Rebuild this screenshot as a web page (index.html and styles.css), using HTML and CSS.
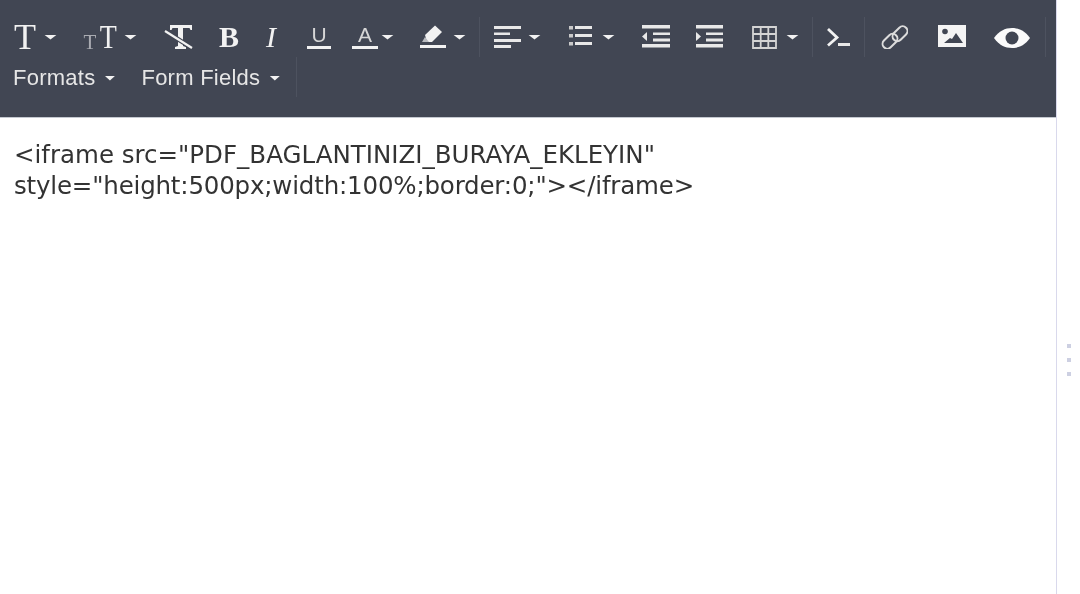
FILE: index.html
```html
<!DOCTYPE html>
<html lang="tr">
<head>
<meta charset="utf-8">
<title>Editor</title>
<link rel="stylesheet" href="styles.css">
</head>
<body>
<div class="editor">
  <div class="toolbar">
    <div class="group">
      <button class="btn"><span class="g g-t">T</span><i class="caret"></i></button>
      <button class="btn"><span class="g g-tt"><small>T</small><span class="tall">T</span></span><i class="caret"></i></button>
      <button class="btn"><svg width="30" height="24" viewBox="0 0 30 24"><path fill="#f2f2f2" d="M7 0h22v5h-1.500l-1-2H20v18l3 1v2H12v-2l3-1V3H9.500l-1 2H7z"/><path stroke="#414653" stroke-width="4.500" d="M2 6l27 17"/><path stroke="#f2f2f2" stroke-width="2.200" d="M2 6l27 17"/></svg></button>
      <button class="btn"><span class="g g-b">B</span></button>
      <button class="btn"><span class="g g-i">I</span></button>
      <button class="btn"><span class="g g-u">U<b class="bar"></b></span></button>
      <button class="btn btn-near gap-3"><span class="g g-a">A<b class="bar"></b></span><i class="caret"></i></button>
      <button class="btn"><svg width="26" height="24" viewBox="0 0 26 24"><path fill="#f2f2f2" d="M15 .500L22 7 12 17H7L5 10z"/><path fill="#b9bbc0" d="M5 12l4 5H2z"/><rect y="20" width="26" height="3" fill="#f2f2f2"/></svg><i class="caret"></i></button>
    </div>
    <div class="group">
      <button class="btn"><svg width="28" height="24" viewBox="0 0 28 24"><path fill="#e8e8e8" d="M1 1h27v3H1zM1 7.500h16v2.500H1zM1 14h27v3H1zM1 20h17v3H1z"/></svg><i class="caret"></i></button>
      <button class="btn"><svg width="28" height="24" viewBox="0 0 28 24"><path fill="#e8e8e8" d="M8 1h17v3H8zM8 9h17v3H8zM8 17h17v3H8z"/><path fill="#c9c9c9" d="M2 1h4v3.500H2zM2 9h4v3.500H2zM2 17h4v3.500H2z"/></svg><i class="caret"></i></button>
      <button class="btn"><svg width="29" height="24" viewBox="0 0 29 24"><path fill="#e8e8e8" d="M1 0h28v3.500H1zM12 7.500h17V10H12zM12 13.500h17v3H12zM1 19h28v3.500H1z"/><path fill="#e8e8e8" d="M6 7v9l-5-4.500z"/></svg></button>
      <button class="btn"><svg width="28" height="24" viewBox="0 0 28 24"><path fill="#e8e8e8" d="M0 0h27v3.500H0zM10 7.500h17V10H10zM10 13.500h17v3H10zM0 19h27v3.500H0z"/><path fill="#e8e8e8" d="M0 7v9l5-4.500z"/></svg></button>
      <button class="btn"><svg width="29" height="24" viewBox="0 0 29 24"><path fill="none" stroke="#d4d4d4" stroke-width="1.800" d="M3 2h23v21H3zM10.700 2v21M18.300 2v21M3 9h23M3 16h23"/></svg><i class="caret"></i></button>
    </div>
    <div class="group">
      <button class="btn"><svg width="25" height="24" viewBox="0 0 25 24"><path fill="none" stroke="#f2f2f2" stroke-width="2.800" d="M2 4l9 8.500L2 20.500"/><rect x="12" y="18" width="12" height="3" fill="#e8e8e8"/></svg></button>
    </div>
    <div class="group">
      <button class="btn"><svg width="30" height="24" viewBox="0 0 30 24"><g fill="none" stroke="#dcdcdc" stroke-width="2"><rect x="13.500" y="4" width="17" height="9.500" rx="4.700" transform="rotate(-45 22 8.750)"/><rect x="3.500" y="11.500" width="17" height="9.500" rx="4.700" transform="rotate(-45 12 16.250)"/></g></svg></button>
      <button class="btn"><svg width="32" height="24" viewBox="0 0 32 24"><path fill="#f4f4f4" d="M4 0h28v22H4z"/><circle cx="11" cy="6.500" r="2.800" fill="#414653"/><path fill="#414653" d="M10 18l6-5 2 1 4-6 7 10z"/></svg></button>
      <button class="btn"><svg width="40" height="24" viewBox="0 0 40 24"><path fill="#fbfbfb" d="M2 13C7 6 13 3 20 3s13 3 18 10c-5 7-11 10-18 10S7 20 2 13z"/><circle cx="20" cy="13" r="6.500" fill="#414653"/></svg></button>
    </div>
    <div class="group group-text">
      <button class="btn btn-text">Formats<i class="caret caret-s"></i></button>
      <button class="btn btn-text">Form Fields<i class="caret caret-s"></i></button>
    </div>
  </div>
  <div class="content">&lt;iframe src="PDF_BAGLANTINIZI_BURAYA_EKLEYIN" <span class="line-2">style="height:500px;width:100%;border:0;"&gt;&lt;/iframe&gt;</span></div>
</div>
<div class="handle"><span></span><span></span><span></span></div>
</body>
</html>
```

FILE: styles.css
```css
html, body {
  margin: 0;
  height: 594px;
  overflow: hidden;
  background: #fff;
}
body {
  display: flex;
  align-items: stretch;
  filter: blur(0.45px);
}
.editor {
  width: 1056px;
  height: 594px;
  border-right: 1px solid #d9d9ec;
  flex: none;
}
.toolbar {
  box-sizing: border-box;
  height: 118px;
  padding-top: 17px;
  background: #414653;
  border-bottom: 1px solid #c4c8d0;
  display: flex;
  flex-wrap: wrap;
  align-content: flex-start;
}
.group {
  display: flex;
  height: 40px;
  border-right: 1px solid #4d525f;
}
.btn {
  display: flex;
  align-items: center;
  gap: 7px;
  height: 40px;
  padding: 0 13px;
  border: 0;
  background: none;
  color: #f2f2f2;
}
.btn svg { display: block; flex: none; }
.btn-near { padding-left: 8px; }
.gap-3 { gap: 3px; }
.caret {
  width: 13px;
  height: 5px;
  background: #f2f2f2;
  clip-path: polygon(0 0, 100% 0, 50% 100%);
}
.caret-s {
  width: 11px;
}
.g {
  position: relative;
  display: block;
  height: 24px;
  line-height: 24px;
  text-align: center;
  font-family: "Liberation Serif", serif;
  color: #f2f2f2;
}
.g-t { width: 24px; font-size: 36px; }
.g-tt { width: 34px; font-size: 34px; text-align: right; }
.g-tt small { font-size: 21px; color: #a9abb1; vertical-align: -1px; }
.tall {
  display: inline-block;
  transform: scaleX(0.82);
  transform-origin: right center;
}
.g-b { width: 20px; font-size: 30px; font-weight: 700; }
.g-i { width: 12px; font-size: 30px; font-style: italic; }
.g-u, .g-a {
  font-family: "Liberation Sans", sans-serif;
  font-size: 21px;
  line-height: 19px;
  color: #d6d6d6;
}
.g-u { width: 28px; padding-left: 4px; box-sizing: border-box; }
.g-a { width: 26px; }
.bar {
  position: absolute;
  left: 0;
  right: 0;
  bottom: 0;
  height: 3px;
  background: #f2f2f2;
}
.g-u .bar { left: 4px; }
.group-text { padding-right: 3px; }
.btn-text {
  font-family: "Liberation Sans", sans-serif;
  font-size: 22px;
  letter-spacing: 0.25px;
  color: #e6e6e6;
  gap: 9px;
  padding-top: 2px;
}
.content {
  padding: 21px 14px 0;
  font-family: "DejaVu Sans", Verdana, sans-serif;
  font-size: 24.5px;
  line-height: 31px;
  color: #333;
}
.line-2 { letter-spacing: -0.18px; }
.handle {
  flex: 1;
  display: flex;
  flex-direction: column;
  align-items: center;
  justify-content: center;
  gap: 10px;
  padding: 126px 0 0 1px;
}
.handle span {
  width: 4px;
  height: 4px;
  background: #cdd0e2;
}
```
